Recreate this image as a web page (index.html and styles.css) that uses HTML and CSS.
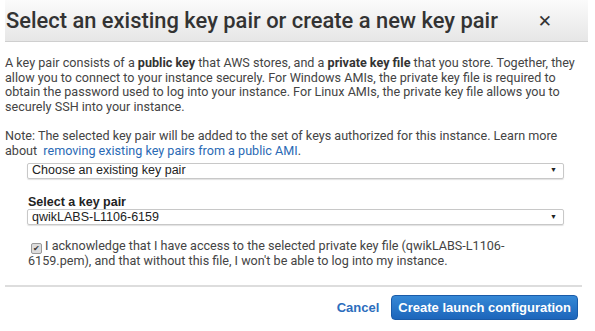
FILE: index.html
```html
<!DOCTYPE html>
<html>
  <head>
    <meta charset="utf-8">
    <meta name="viewport" content="width=device-width,initial-scale=1">
    <title>Key pair</title>
    <link rel="stylesheet" href="styles.css">
  </head>
  <body>
    <div class="dialog">
      <div class="dialog-header">
        <h1 class="dialog-title">Select an existing key pair or create a new key pair</h1>
        <span class="dialog-close">&#x2715;</span>
      </div>
      <div class="dialog-body">
        <p class="intro">A key pair consists of a <b>public key</b> that AWS stores, and a <b>private key file</b> that you store. Together, they allow you to connect to your instance securely. For Windows AMIs, the private key file is required to obtain the password used to log into your instance. For Linux AMIs, the private key file allows you to securely SSH into your instance.</p>
        <p class="note">Note: The selected key pair will be added to the set of keys authorized for this instance. Learn more about <a class="link" href="#">removing existing key pairs from a public AMI</a>.</p>
        <div class="form">
          <div class="select">
            <span>Choose an existing key pair</span>
            <span class="caret">&#x25BC;</span>
          </div>
          <label class="field-label">Select a key pair</label>
          <div class="select">
            <span>qwikLABS-L1106-6159</span>
            <span class="caret">&#x25BC;</span>
          </div>
          <p class="ack"><span class="check">&#x2714;</span> I acknowledge that I have access to the selected private key file (qwikLABS-L1106-&#8203;6159.pem), and that without this file, I won't be able to log into my instance.</p>
        </div>
      </div>
      <div class="dialog-footer">
        <a class="cancel" href="#">Cancel</a>
        <button class="primary">Create launch configuration</button>
      </div>
    </div>
  </body>
</html>
```

FILE: styles.css
```css
* {
  box-sizing: border-box;
  margin: 0;
  padding: 0;
}

body {
  background: #fff;
  font-family: Roboto, "Liberation Sans", sans-serif;
  color: #444;
}

.dialog {
  width: 588px;
  padding-left: 5px;
}

.dialog-header {
  align-items: center;
  background: linear-gradient(#fbfbfb, #e6e6e6);
  border-bottom: 1px solid #cfcfcf;
  display: flex;
  height: 42px;
  justify-content: space-between;
  padding: 0 36px 0 1px;
}

.dialog-title {
  color: #333;
  font-size: 21.9px;
  font-weight: 500;
}

.dialog-close {
  color: #333;
  font-family: "DejaVu Sans", sans-serif;
  font-size: 17px;
  font-weight: bold;
}

.dialog-body {
  font-size: 12.6px;
  line-height: 14.6px;
  padding-top: 14px;
}

.intro b {
  font-weight: 700;
  color: #333;
}

.note {
  margin-top: 15px;
}

.link {
  color: #2a6ab5;
  text-decoration: none;
  margin-left: 3px;
}

.form {
  padding: 4px 0 0 22px;
  width: 559px;
}

.select {
  align-items: center;
  border: 1px solid #c8c8c8;
  border-radius: 2px;
  box-shadow: 0 1px 1px rgba(0, 0, 0, 0.12);
  color: #222;
  display: flex;
  font-family: "Liberation Sans", Arial, sans-serif;
  font-size: 12.5px;
  height: 16px;
  justify-content: space-between;
  padding: 0 6px 0 4px;
}

.caret {
  font-size: 7px;
}

.field-label {
  color: #222;
  display: block;
  font-family: "Liberation Sans", Arial, sans-serif;
  font-size: 12.5px;
  font-weight: bold;
  margin: 16px 0 0 1px;
}

.ack {
  margin-top: 14px;
  padding-left: 1px;
  padding-right: 40px;
}

.check {
  background: #ddd;
  border: 1px solid #999;
  border-radius: 2px;
  color: #333;
  display: inline-block;
  font-size: 8px;
  height: 11px;
  line-height: 9px;
  margin-left: 3px;
  text-align: center;
  vertical-align: -1px;
  width: 11px;
}

.dialog-footer {
  align-items: center;
  border-top: 2px solid #ddd;
  display: flex;
  gap: 12px;
  justify-content: flex-end;
  margin: 16px 6px 0 0;
  padding: 8px 4px 0 0;
}

.cancel {
  color: #2c6dbd;
  font-family: "Liberation Sans", Arial, sans-serif;
  font-size: 13px;
  font-weight: bold;
  text-decoration: none;
}

.primary {
  background: linear-gradient(#3588d6, #1d66bb);
  border: 1px solid #1a5ba8;
  border-radius: 4px;
  color: #fff;
  font-family: "Liberation Sans", Arial, sans-serif;
  font-size: 13px;
  font-weight: bold;
  height: 25px;
  padding: 0 6px;
}
```
